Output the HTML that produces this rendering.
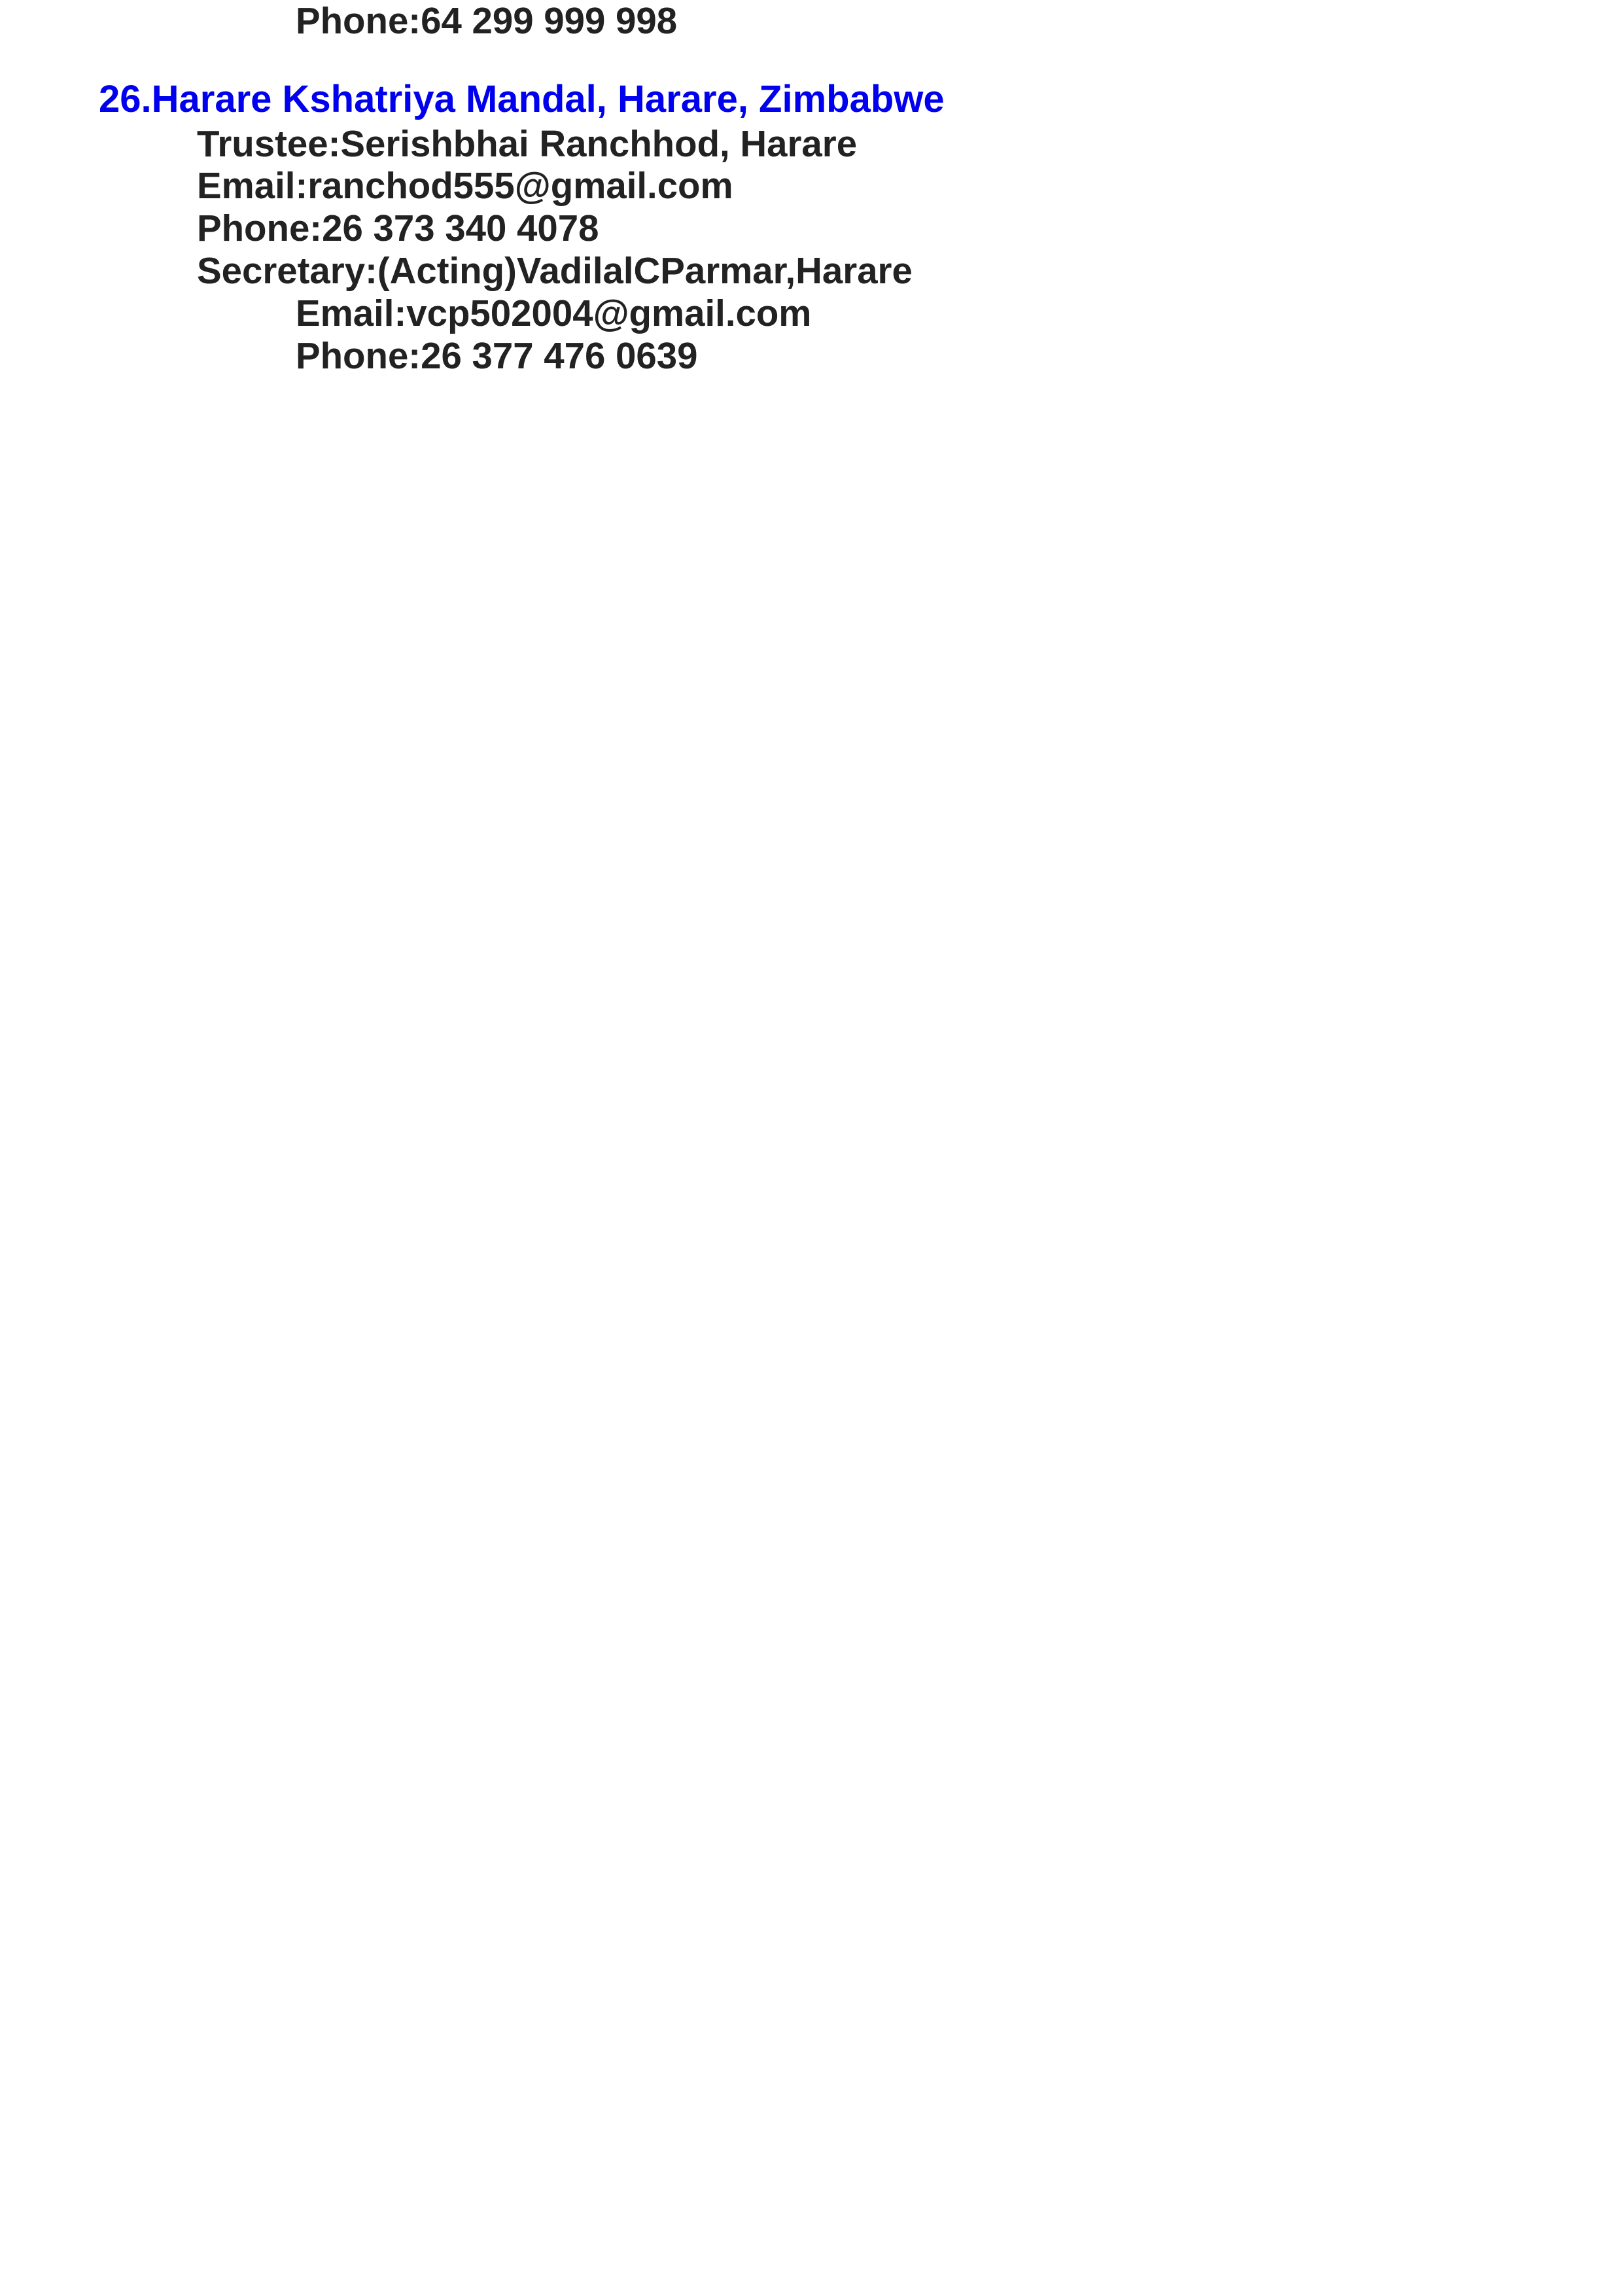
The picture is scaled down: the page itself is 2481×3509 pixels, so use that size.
<!DOCTYPE html>
<html><head><meta charset="utf-8"><style>
html,body{margin:0;padding:0;background:#fff;}
body{width:2481px;height:3509px;position:relative;overflow:hidden;font-family:"Liberation Sans",Arial,sans-serif;font-weight:bold;font-size:56.4px;color:#222;}
.l{position:absolute;line-height:65px;white-space:nowrap;}
.h{color:#0000ee;font-size:58px;}
</style></head><body>
<div class="l" style="left:452px;top:-1px">Phone:64 299 999 998</div>
<div class="l h" style="left:151px;top:119px">26.Harare Kshatriya Mandal, Harare, Zimbabwe</div>
<div class="l" style="left:301px;top:187px">Trustee:Serishbhai Ranchhod, Harare</div>
<div class="l" style="left:301px;top:251px">Email:ranchod555@gmail.com</div>
<div class="l" style="left:301px;top:316px">Phone:26 373 340 4078</div>
<div class="l" style="left:301px;top:381px">Secretary:(Acting)VadilalCParmar,Harare</div>
<div class="l" style="left:452px;top:446px">Email:vcp502004@gmail.com</div>
<div class="l" style="left:452px;top:511px">Phone:26 377 476 0639</div>
</body></html>
